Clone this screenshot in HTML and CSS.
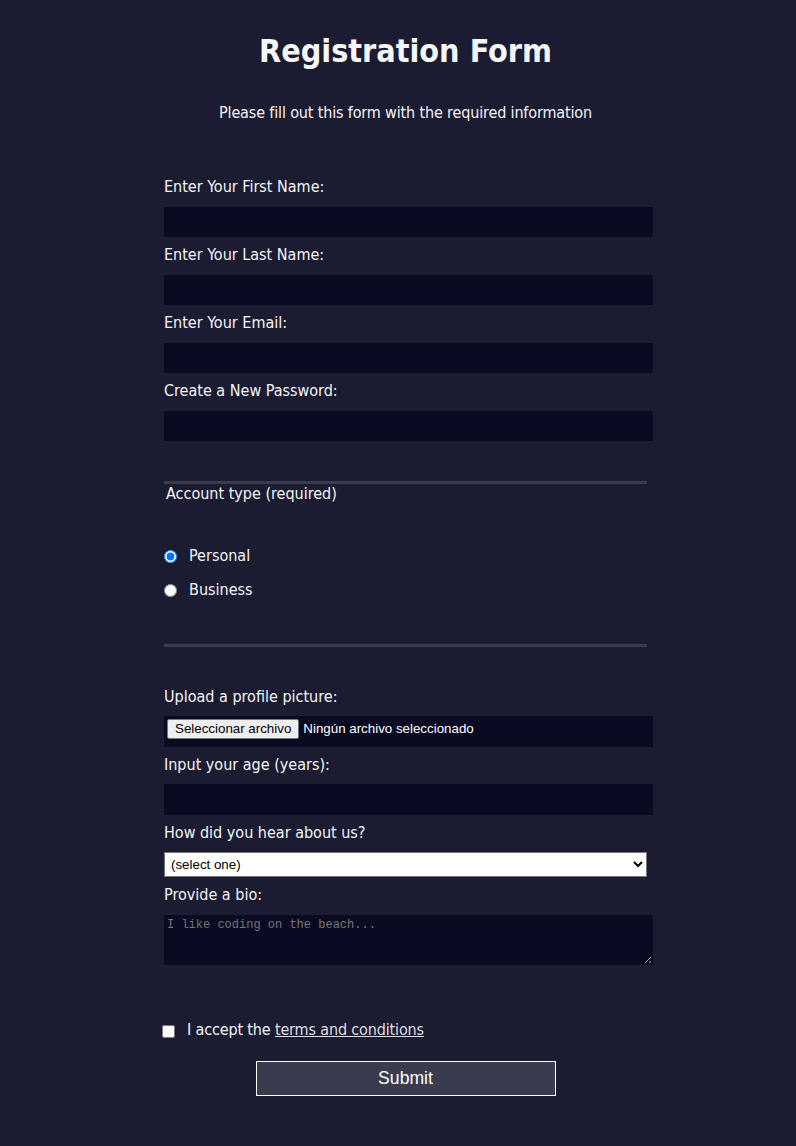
FILE: index.html
```html
<!DOCTYPE html>
<html lang="en">
<head>
<meta charset="utf-8">
<title>Registration Form</title>
<link rel="stylesheet" href="styles.css">
</head>
<body>
  <h1 class="title">Registration Form</h1>
  <p class="subtitle">Please fill out this form with the required information</p>
  <form class="form" action="#">
    <fieldset class="group group-border">
      <label class="field-label">Enter Your First Name:<input class="field" type="text"></label>
      <label class="field-label">Enter Your Last Name:<input class="field" type="text"></label>
      <label class="field-label">Enter Your Email:<input class="field" type="email"></label>
      <label class="field-label">Create a New Password:<input class="field" type="password"></label>
    </fieldset>
    <fieldset class="group group-border group-account">
      <legend class="legend">Account type (required)</legend>
      <label class="choice"><input class="choice-input" type="radio" name="account" checked>Personal</label>
      <label class="choice"><input class="choice-input" type="radio" name="account">Business</label>
    </fieldset>
    <fieldset class="group group-last">
      <label class="field-label">Upload a profile picture:
        <span class="file">
          <span class="file-button">Seleccionar archivo</span>
          <span class="file-name">Ningún archivo seleccionado</span>
        </span>
      </label>
      <label class="field-label">Input your age (years):<input class="field" type="number"></label>
      <label class="field-label">How did you hear about us?
        <select class="select">
          <option>(select one)</option>
          <option>freeCodeCamp News</option>
          <option>freeCodeCamp YouTube Channel</option>
          <option>freeCodeCamp Forum</option>
          <option>Other</option>
        </select>
      </label>
      <label class="field-label">Provide a bio:<textarea class="bio" placeholder="I like coding on the beach..."></textarea></label>
    </fieldset>
    <label class="choice terms"><input class="choice-input" type="checkbox">I accept the&nbsp;<a class="link" href="#">terms and conditions</a></label>
    <input class="submit" type="submit" value="Submit">
  </form>
</body>
</html>
```
FILE: styles.css
```css
html, body {
  background-color: #1b1b32;
}
body {
  margin: 0;
  padding: 0 0 0 15px;
  color: #f5f6f7;
  font-family: "DejaVu Sans Condensed", "DejaVu Sans", sans-serif;
  font-stretch: condensed;
  font-size: 16px;
  line-height: 19.33px;
}
.title {
  margin: 32px 0;
  text-align: center;
  font-size: 32px;
  line-height: 38.63px;
  font-weight: bold;
}
.subtitle {
  margin: 16px 0 15.5px;
  text-align: center;
  letter-spacing: -0.15px;
}
.form {
  width: 487px;
  margin: 0 auto;
  padding-bottom: 32px;
}
.group {
  margin: 0 2px;
  padding: 32px 0;
  border: none;
  min-width: 0;
}
.group-border {
  border-bottom: 3px solid #3b3b4f;
}
.group-account {
  padding: 30.5px 0 32.67px;
}
.group-last {
  padding-bottom: 35.5px;
}
.legend {
  padding: 0 2px;
  line-height: 19.33px;
}
.field-label {
  display: block;
  margin: 8px 0;
}
.field {
  display: block;
  margin: 10px 0 0 0;
  width: 100%;
  height: 26.67px;
  padding: 1px 2px;
  border: 1px solid #0a0a23;
  background-color: #0a0a23;
  color: #ffffff;
  box-sizing: content-box;
  font-family: "Liberation Sans", Arial, sans-serif;
  font-size: 13.33px;
  outline: none;
}
.file {
  display: flex;
  align-items: flex-start;
  margin: 10px 0 0 0;
  width: 100%;
  height: 26.67px;
  padding: 1px 2px;
  border: 1px solid #0a0a23;
  background-color: #0a0a23;
  box-sizing: content-box;
  font-family: "Liberation Sans", Arial, sans-serif;
  font-size: 13.33px;
}
.file-button {
  display: block;
  height: 18px;
  padding: 0 7px;
  margin: 0.7px 4px 0 0;
  background-color: #efefef;
  border: 1px solid #767676;
  border-radius: 2px;
  color: #000000;
  line-height: 18px;
}
.file-name {
  display: block;
  margin-top: 1.7px;
  line-height: 18px;
  color: #ffffff;
}
.select {
  display: block;
  margin: 10px 0 0 0;
  width: 100%;
  height: 25.67px;
  box-sizing: border-box;
  background-color: #ffffff;
  color: #000000;
  border: 1px solid #767676;
  border-radius: 0;
  font-family: "Liberation Sans", Arial, sans-serif;
  font-size: 13.33px;
  padding: 0 2px;
}
.bio {
  display: block;
  margin: 10px 0 0 0;
  width: 100%;
  height: 44.67px;
  padding: 2px;
  border: 1px solid #0a0a23;
  background-color: #0a0a23;
  color: #ffffff;
  box-sizing: content-box;
  font-family: "Liberation Mono", monospace;
  font-size: 12px;
  line-height: 15px;
  resize: both;
  outline: none;
}
.bio::placeholder {
  color: #757575;
}
.choice {
  display: flex;
  align-items: center;
  height: 26.33px;
  margin: 8px 0;
}
.choice-input {
  width: 13px;
  height: 13px;
  margin: 2px 12px 0 0;
}
.terms {
  letter-spacing: -0.15px;
}
.link {
  color: #dfdfe2;
}
.submit {
  display: block;
  width: 300px;
  height: 35.2px;
  margin: 17.6px auto 0;
  background-color: #3b3b4f;
  color: #ffffff;
  border: 1px solid #ffffff;
  font-family: "Liberation Sans", Arial, sans-serif;
  font-size: 17.6px;
  letter-spacing: 0;
  padding: 0;
}
```
